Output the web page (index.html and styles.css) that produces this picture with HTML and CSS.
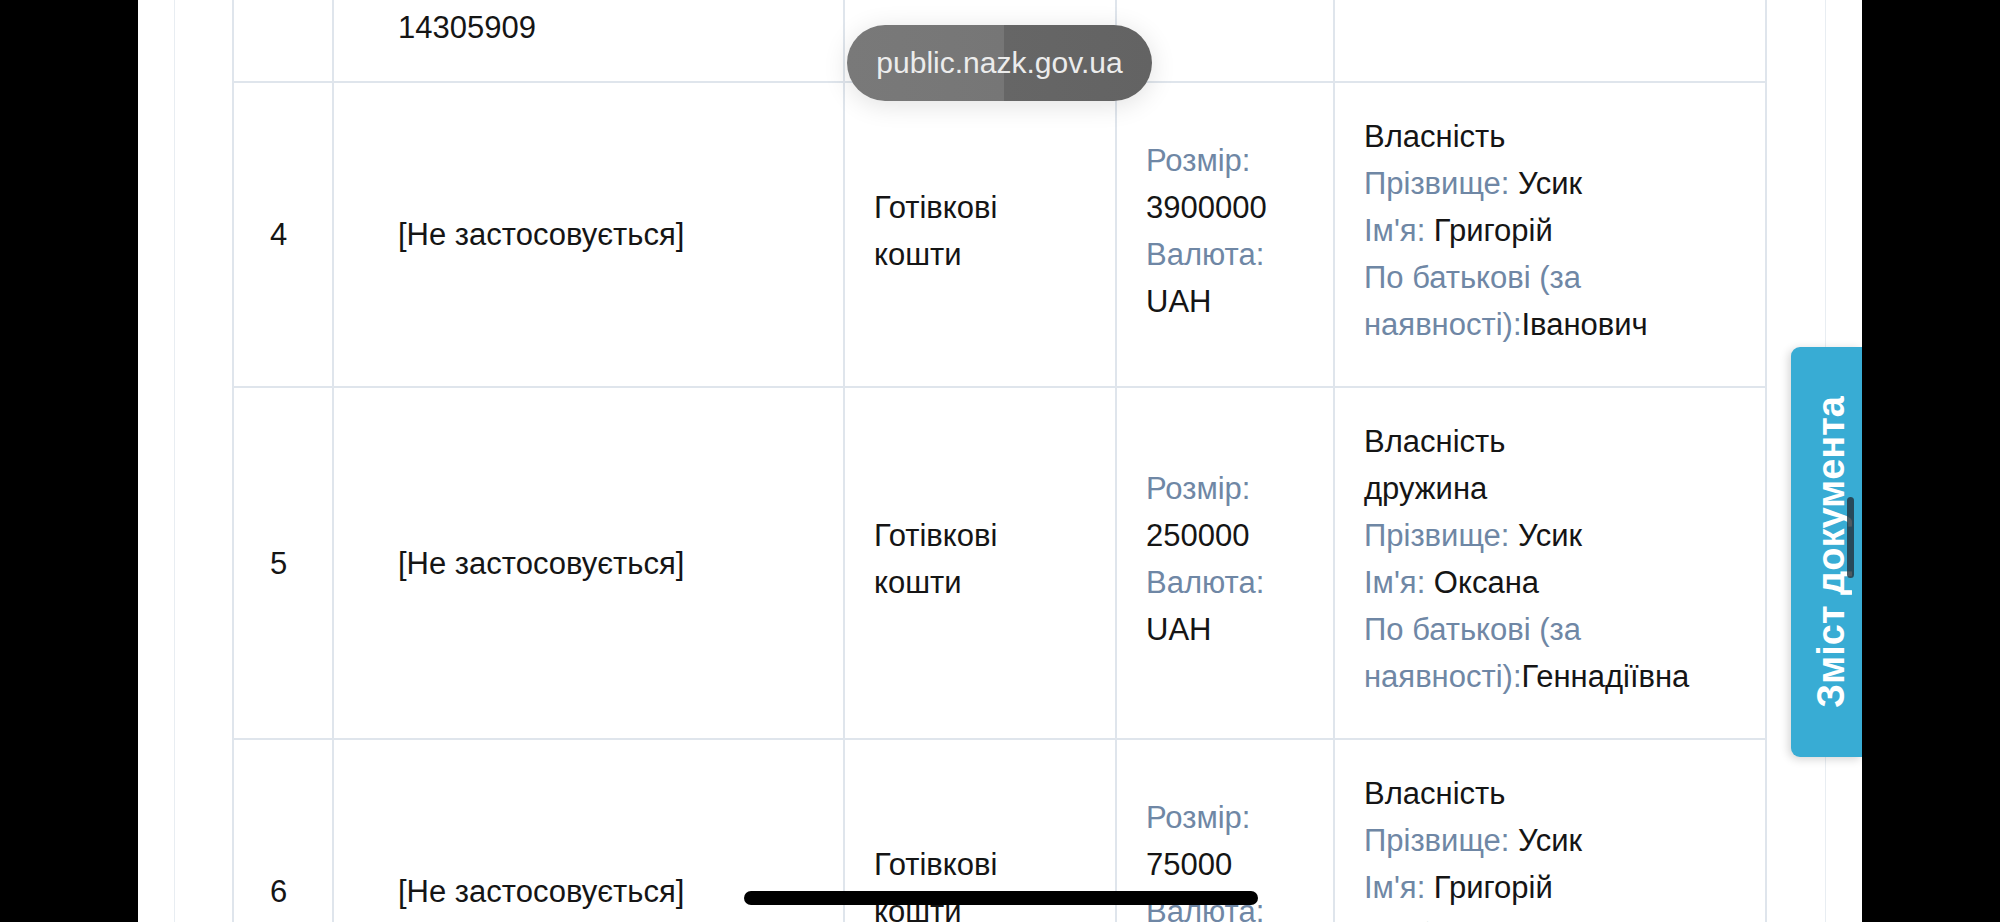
FILE: index.html
```html
<!DOCTYPE html>
<html lang="uk">
<head>
<meta charset="utf-8">
<title>public.nazk.gov.ua</title>
<link rel="stylesheet" href="styles.css">
</head>
<body>
<div class="screen">
  <div class="side"></div>
  <main class="page">
    <div class="doc">
      <div class="table">
        <div class="row">
          <div class="cell num">3</div>
          <div class="cell name">
            <div class="line lbl">Найменування:</div>
            <div class="line">АКЦІОНЕРНЕ ТОВАРИСТВО</div>
            <div class="line">КОМЕРЦІЙНИЙ БАНК</div>
            <div class="line">«ПРИВАТБАНК»</div>
            <div class="line lbl">Код в Єдиному державному</div>
            <div class="line lbl">реєстрі юридичних осіб:</div>
            <div class="line">14305909</div>
          </div>
          <div class="cell"><div class="stack"><div>Кошти на</div><div>рахунках</div></div></div>
          <div class="cell"><div class="stack"><div class="lbl">Розмір:</div><div>100000</div><div class="lbl">Валюта:</div><div>UAH</div></div></div>
          <div class="cell"><div class="stack"><div>Власність</div><div><span class="lbl">Прізвище:</span> Усик</div><div><span class="lbl">Ім'я:</span> Григорій</div><div class="lbl">По батькові (за</div><div><span class="lbl">наявності):</span>Іванович</div></div></div>
        </div>
        <div class="row">
          <div class="cell num">4</div>
          <div class="cell name">[Не застосовується]</div>
          <div class="cell"><div class="stack"><div>Готівкові</div><div>кошти</div></div></div>
          <div class="cell"><div class="stack"><div class="lbl">Розмір:</div><div>3900000</div><div class="lbl">Валюта:</div><div>UAH</div></div></div>
          <div class="cell"><div class="stack"><div>Власність</div><div><span class="lbl">Прізвище:</span> Усик</div><div><span class="lbl">Ім'я:</span> Григорій</div><div class="lbl">По батькові (за</div><div><span class="lbl">наявності):</span>Іванович</div></div></div>
        </div>
        <div class="row">
          <div class="cell num">5</div>
          <div class="cell name">[Не застосовується]</div>
          <div class="cell"><div class="stack"><div>Готівкові</div><div>кошти</div></div></div>
          <div class="cell"><div class="stack"><div class="lbl">Розмір:</div><div>250000</div><div class="lbl">Валюта:</div><div>UAH</div></div></div>
          <div class="cell"><div class="stack"><div>Власність</div><div>дружина</div><div><span class="lbl">Прізвище:</span> Усик</div><div><span class="lbl">Ім'я:</span> Оксана</div><div class="lbl">По батькові (за</div><div><span class="lbl">наявності):</span>Геннадіївна</div></div></div>
        </div>
        <div class="row">
          <div class="cell num">6</div>
          <div class="cell name">[Не застосовується]</div>
          <div class="cell"><div class="stack"><div>Готівкові</div><div>кошти</div></div></div>
          <div class="cell"><div class="stack"><div class="lbl">Розмір:</div><div>75000</div><div class="lbl">Валюта:</div><div>UAH</div></div></div>
          <div class="cell"><div class="stack"><div>Власність</div><div><span class="lbl">Прізвище:</span> Усик</div><div><span class="lbl">Ім'я:</span> Григорій</div><div class="lbl">По батькові (за</div><div><span class="lbl">наявності):</span>Іванович</div></div></div>
        </div>
      </div>
    </div>
  </main>
  <div class="side"></div>

  <div class="url-pill">public.nazk.gov.ua</div>
  <button class="toc-tab" type="button"><span class="toc-text">Зміст документа</span></button>
  <div class="scroll-ind"></div>
  <div class="home-ind"></div>
</div>
</body>
</html>
```

FILE: styles.css
```css
* { box-sizing: border-box; }

html, body {
  margin: 0;
  padding: 0;
  background: #000;
  height: 922px;
  overflow: hidden;
}

body {
  font-family: "Liberation Sans", Arial, sans-serif;
  font-size: 31px;
  line-height: 47px;
  color: #151515;
}

.screen {
  position: relative;
  display: flex;
  width: 2000px;
  height: 922px;
  overflow: hidden;
}

.side {
  flex: 0 0 138px;
  background: #000;
}

.page {
  flex: 0 0 1724px;
  background: #fff;
  overflow: hidden;
}

.doc {
  display: flow-root;
  margin: 0 36px;
  height: 100%;
  border-left: 1px solid #e8edf2;
  border-right: 1px solid #e8edf2;
  padding: 0 57px;
}

.table {
  margin-top: -310px;
  width: 1535px;
  border-left: 2px solid #dfe5ec;
  border-top: 2px solid #dfe5ec;
}

.row {
  display: grid;
  grid-template-columns: 100px 511px 272px 218px 432px;
}

.cell {
  display: flex;
  flex-direction: column;
  justify-content: center;
  padding: 30px 20px 30px 29px;
  border-right: 2px solid #dfe5ec;
  border-bottom: 2px solid #dfe5ec;
  white-space: nowrap;
}

.cell.num {
  padding-left: 36px;
  padding-right: 10px;
}

.cell.name {
  padding-left: 64px;
}

.stack {
  padding-bottom: 8px;
}

.lbl {
  color: #6f87a5;
}

.url-pill {
  position: absolute;
  left: 847px;
  top: 25px;
  width: 305px;
  height: 76px;
  border-radius: 38px;
  background: linear-gradient(to right, #797979 0%, #767676 51.5%, #666 51.5%, #636363 100%);
  color: #ececec;
  font-size: 30px;
  line-height: 76px;
  text-align: center;
  box-shadow: 0 4px 26px rgba(0, 0, 0, 0.12);
}

.toc-tab {
  position: absolute;
  left: 1791px;
  top: 347px;
  width: 71px;
  height: 410px;
  margin: 0;
  padding: 0 0 0 8px;
  border: 0;
  border-radius: 9px 0 0 9px;
  background: #38acd4;
  box-shadow: -2px 2px 10px rgba(0, 0, 0, 0.18);
  display: flex;
  align-items: center;
  justify-content: center;
}

.toc-text {
  writing-mode: vertical-rl;
  transform: rotate(180deg);
  font-family: "Liberation Sans", Arial, sans-serif;
  font-weight: 700;
  font-size: 38px;
  line-height: 40px;
  color: #fff;
  white-space: nowrap;
}

.scroll-ind {
  position: absolute;
  left: 1847px;
  top: 497px;
  width: 7px;
  height: 81px;
  border-radius: 4px;
  background: rgba(35, 50, 60, 0.8);
}

.home-ind {
  position: absolute;
  left: 744px;
  top: 891px;
  width: 514px;
  height: 14px;
  border-radius: 7px;
  background: #000;
}
```
